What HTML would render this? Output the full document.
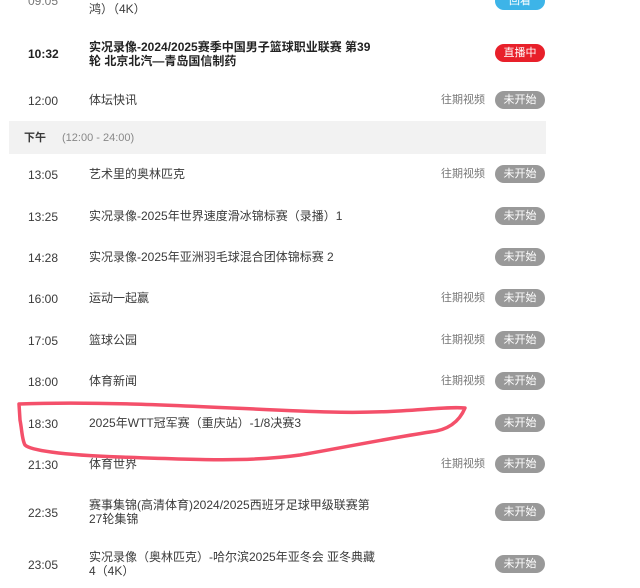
<!DOCTYPE html>
<html><head><meta charset="utf-8"><style>
body{margin:0;width:640px;height:588px;overflow:hidden;background:#fff;font-family:"Liberation Sans","Noto Sans CJK SC",sans-serif;font-size:12px;color:#3a3a3a;position:relative}
.a{position:absolute;white-space:nowrap;line-height:14px}
.t{left:28px;margin-top:1px}.n{left:89px}.h{left:441px;color:#777;font-size:11px}
.b{position:absolute;left:495px;width:50px;height:18px;margin-top:-1px;border-radius:9px;background:#999;color:#fff;font-size:11px;line-height:18px;text-align:center}
</style></head><body>
<div class="a t" style="top:-7px;color:#777">09:05</div>
<div class="a n" style="top:2px">鸿）（4K）</div>
<div class="b" style="top:-7px;background:#3db4e8">回看</div>

<div class="a t" style="top:46px;font-weight:bold;color:#222">10:32</div>
<div class="a n" style="top:40px;font-weight:bold;color:#222">实况录像-2024/2025赛季中国男子篮球职业联赛 第39</div>
<div class="a n" style="top:54px;font-weight:bold;color:#222">轮 北京北汽—青岛国信制药</div>
<div class="b" style="top:45px;background:#e8202a">直播中</div>

<div class="a t" style="top:93px">12:00</div><div class="a n" style="top:93px">体坛快讯</div><div class="a h" style="top:93px">往期视频</div><div class="b" style="top:92px">未开始</div>

<div style="position:absolute;left:9px;top:121px;width:537px;height:33px;background:#f2f2f2"></div>
<div class="a" style="left:24px;top:131px;font-weight:bold;font-size:11px">下午</div>
<div class="a" style="left:62px;top:131px;color:#888;font-size:11px">(12:00 - 24:00)</div>

<div class="a t" style="top:167px">13:05</div><div class="a n" style="top:167px">艺术里的奥林匹克</div><div class="a h" style="top:167px">往期视频</div><div class="b" style="top:166px">未开始</div>
<div class="a t" style="top:209px">13:25</div><div class="a n" style="top:209px">实况录像-2025年世界速度滑冰锦标赛（录播）1</div><div class="b" style="top:208px">未开始</div>
<div class="a t" style="top:250px">14:28</div><div class="a n" style="top:250px">实况录像-2025年亚洲羽毛球混合团体锦标赛 2</div><div class="b" style="top:249px">未开始</div>
<div class="a t" style="top:291px">16:00</div><div class="a n" style="top:291px">运动一起赢</div><div class="a h" style="top:291px">往期视频</div><div class="b" style="top:290px">未开始</div>
<div class="a t" style="top:333px">17:05</div><div class="a n" style="top:333px">篮球公园</div><div class="a h" style="top:333px">往期视频</div><div class="b" style="top:332px">未开始</div>
<div class="a t" style="top:374px">18:00</div><div class="a n" style="top:374px">体育新闻</div><div class="a h" style="top:374px">往期视频</div><div class="b" style="top:373px">未开始</div>
<div class="a t" style="top:416px">18:30</div><div class="a n" style="top:416px">2025年WTT冠军赛（重庆站）-1/8决赛3</div><div class="b" style="top:415px">未开始</div>
<div class="a t" style="top:457px">21:30</div><div class="a n" style="top:457px">体育世界</div><div class="a h" style="top:457px">往期视频</div><div class="b" style="top:456px">未开始</div>
<div class="a t" style="top:505px">22:35</div><div class="a n" style="top:498px">赛事集锦(高清体育)2024/2025西班牙足球甲级联赛第</div><div class="a n" style="top:512px">27轮集锦</div><div class="b" style="top:504px">未开始</div>
<div class="a t" style="top:557px">23:05</div><div class="a n" style="top:550px">实况录像（奥林匹克）-哈尔滨2025年亚冬会 亚冬典藏</div><div class="a n" style="top:564px">4（4K）</div><div class="b" style="top:556px">未开始</div>

<svg style="position:absolute;left:0;top:0" width="640" height="588"><path d="M19 404 C120 400 250 410 330 412 C400 414 440 406 465 408 C460 420 450 430 430 432 C390 438 330 450 300 455 C250 462 200 460 120 457 C60 455 30 450 25 445 C22 440 22 430 20 420 Z" fill="none" stroke="#f4506a" stroke-width="3.5" stroke-linejoin="round"/></svg>
</body></html>
